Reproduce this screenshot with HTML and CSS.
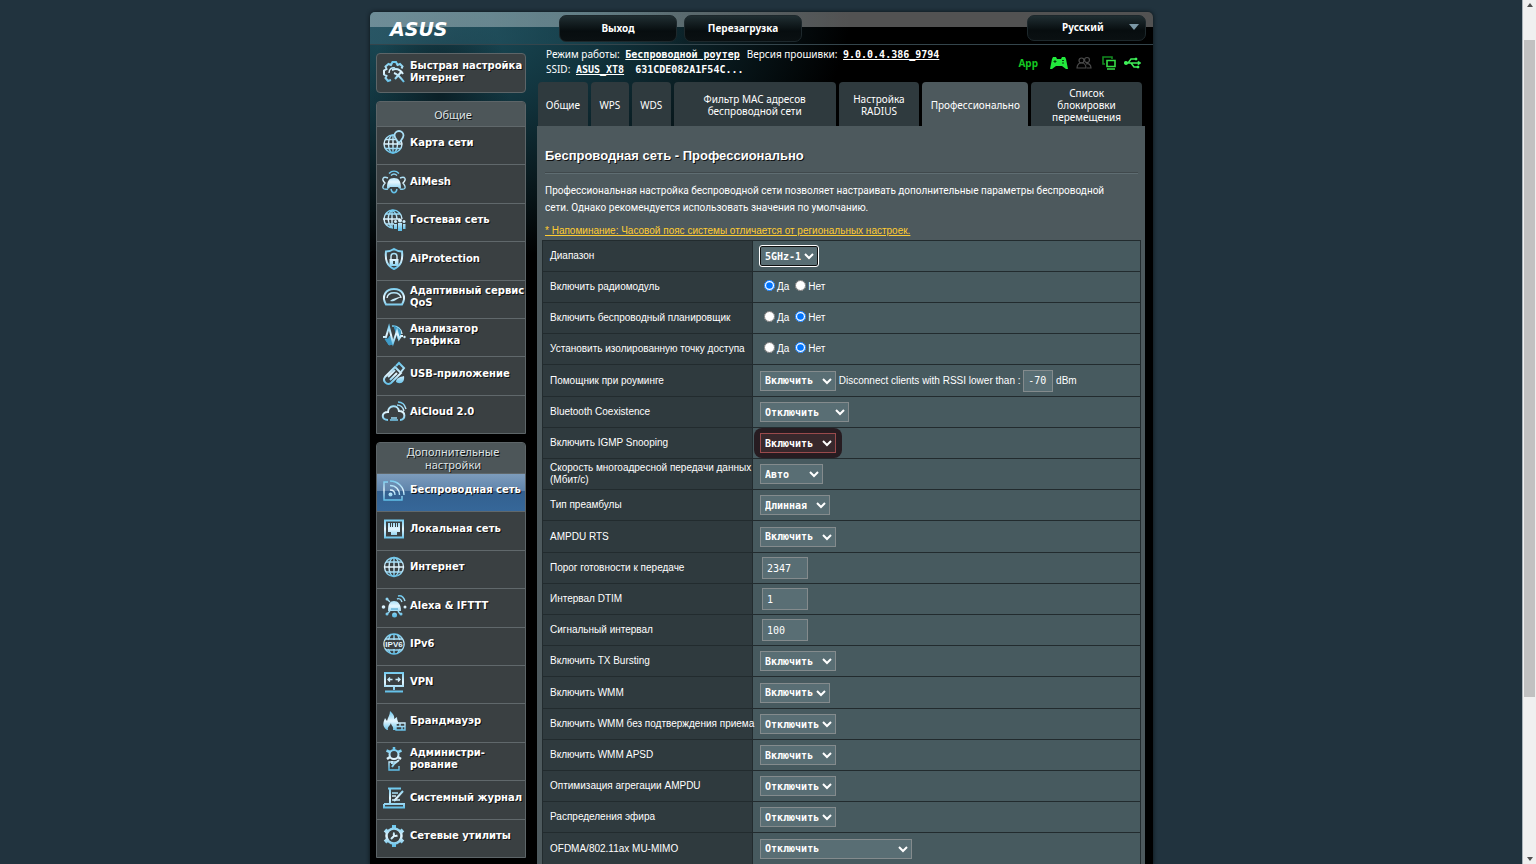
FILE: index.html
```html
<!DOCTYPE html>
<html lang="ru">
<head>
<meta charset="utf-8">
<title>ASUS Wireless Router - Профессионально</title>
<link rel="stylesheet" href="styles.css">
</head>
<body>
<svg class="defs" width="0" height="0" aria-hidden="true">
  <defs>
    <linearGradient id="ice" gradientUnits="userSpaceOnUse" x1="0" y1="2" x2="0" y2="22">
      <stop offset="0" stop-color="#6cc8ee"/><stop offset=".5" stop-color="#e6f7ff"/><stop offset="1" stop-color="#5fbfe8"/>
    </linearGradient>
  </defs>
</svg>
<div class="viewport">
<div class="router">
  <header class="topbar">
    <svg class="logo" viewBox="0 0 60 16" role="img" aria-label="ASUS"><text x="0" y="15">ASUS</text></svg>
    <button class="top-btn logout" type="button">Выход</button>
    <button class="top-btn reboot" type="button">Перезагрузка</button>
    <button class="top-btn lang" type="button">Русский<span class="caret"></span></button>
  </header>
  <div class="columns">
    <nav class="sidebar">
      <a class="quick" href="#">
        <svg class="ico" viewBox="0 0 24 24"><path d="M9 20l-3 1-2.500-3 1-2-2.500-1.500v-4L4.500 9l-1-2.500L6.500 4 9 5l1.500-3h3.500l1.500 3 2.500-1 2.500 2.500-1 2" class="s2"/><path d="M7 13c0-4 3-6 6-5" class="s"/><path d="M10 10c4-2 8-1 11 4M12 13c3 1 7 5 10 9M13 19l7-8" class="s2"/></svg>
        <span>Быстрая настройка<br>Интернет</span>
      </a>
      <section class="menu">
        <h2>Общие</h2>
        <ul>
          <li><a href="#"><svg class="ico" viewBox="0 0 24 24"><circle cx="11" cy="13" r="9" class="s"/><ellipse cx="11" cy="13" rx="4.500" ry="9" class="s"/><path d="M11 4v18M2 13h18M3 8.500h13M3.500 17.500h15" class="s"/><path d="M17 12c-3-4-4.500-5-4.500-7.500a4.500 4.500 0 0 1 9 0C21.500 7 20 8 17 12z" class="pin"/></svg><span>Карта сети</span></a></li>
          <li><a href="#"><svg class="ico" viewBox="0 0 24 24"><path d="M5 18c0-7 2-10 7-10s7 3 7 10c-1 1-2 1-3-1H8c-1 2-2 2-3 1z" class="f"/><path d="M7 3.500c3-3 7-3 10 0M9 5.500c2-2 4-2 6 0" class="s"/><path d="M6 8C1 6-1 9 3 13c-4 5-2 7 3 6M18 8c5-2 7 1 3 5 4 5 2 7-3 6" class="s"/><path d="M9 19c1 5 5 5 6 0" class="s"/></svg><span>AiMesh</span></a></li>
          <li><a href="#"><svg class="ico" viewBox="0 0 24 24"><path d="M11 20a9 9 0 1 1 9-9M10 20C5 14 5 7 10 2c3 2 5 5 5 9M1 11h17M3 6h15M3 16h9M10 2v18" class="s"/><circle cx="18" cy="12.500" r="2" class="f"/><circle cx="13.500" cy="13.500" r="1.500" class="f"/><circle cx="22" cy="13.500" r="1.500" class="f"/><path d="M16 15h4v8h-4zM12 16h3v5h-3zM21 16h2.500v5H21z" class="f"/></svg><span>Гостевая сеть</span></a></li>
          <li><a href="#"><svg class="ico" viewBox="0 0 24 24"><path d="M12 2c3 2 5 2.500 8 2.500 1 9-1 14-8 17.500C5 18.500 3 13.500 4 4.500 7 4.500 9 4 12 2z" class="s2"/><path d="M9 12v-2.500a3 3 0 0 1 6 0V12" class="s"/><path d="M7.500 12h9v7h-9z" class="f"/><path d="M12 14v3" class="dark"/></svg><span>AiProtection</span></a></li>
          <li><a href="#"><svg class="ico" viewBox="0 0 24 24"><path d="M4 19.500C-1 11 4 4 12 4s13 7 8 15.500z" class="s2"/><path d="M5 13c1-7 13-7 14 0" class="s"/><path d="M8 16c4 1 6-1 12-5-5 2-9 2-12 5z" class="f"/></svg><span>Адаптивный сервис<br>QoS</span></a></li>
          <li><a href="#"><svg class="ico" viewBox="0 0 24 24"><path d="M10 3a9 9 0 0 1 10 8" class="s"/><path d="M12 3l6 4 1 7-3 2zM3 16h3l2-3 3 8-4 1z" class="tint"/><path d="M1 14h3l3-10 4 16 4-12 2 8 2-3h2" class="s2"/><circle cx="22.500" cy="14" r="1.200" class="f"/></svg><span>Анализатор<br>трафика</span></a></li>
          <li><a href="#"><svg class="ico" viewBox="0 0 24 24"><path d="M3 15L13 5l6 6L9 21c-4 3-9-2-6-6z" class="s2"/><path d="M14 4l3-3 5 5-3 4M6 15l7-7M8 18l7-7" class="s2"/><path d="M14 20c0-4 4-5 8-6 1 6-3 9-8 6z" class="f"/></svg><span>USB-приложение</span></a></li>
          <li><a href="#"><svg class="ico" viewBox="0 0 24 24"><path d="M6 20c-7 0-7-8 0-8 0-7 10-8 11-1 7 0 7 9 1 9" class="s2"/><path d="M15 5c4 0 6 2 7 6M16 2c5 0 7 3 8 7" class="s"/><path d="M8 20h8M9 18h6" class="s"/></svg><span>AiCloud 2.0</span></a></li>
        </ul>
      </section>
      <section class="menu">
        <h2>Дополнительные настройки</h2>
        <ul>
          <li class="current"><a href="#"><svg class="ico" viewBox="0 0 24 24"><path d="M6 4H2v18h18v-4M8 3c8 0 14 6 14 14M8 7.500c6 0 9.500 4 9.500 9.500M8 12c3 0 5 2 5 5" class="s"/><circle cx="8.500" cy="16.500" r="2" class="f"/></svg><span>Беспроводная сеть</span></a></li>
          <li><a href="#"><svg class="ico" viewBox="0 0 24 24"><path d="M3 3.500h18v17H3z" class="s2"/><path d="M6 6h2v4h1V6h1v4h1V6h2v4h1V6h1v4h1V6h2v9h-3v3H9v-3H6z" class="f"/></svg><span>Локальная сеть</span></a></li>
          <li><a href="#"><svg class="ico" viewBox="0 0 24 24"><circle cx="12" cy="12" r="9.500" class="s"/><ellipse cx="12" cy="12" rx="5" ry="9.500" class="s"/><path d="M12 2v20M2 12h20M4 7h16M4 17h16" class="s"/></svg><span>Интернет</span></a></li>
          <li><a href="#"><svg class="ico" viewBox="0 0 24 24"><path d="M6 17c0-7 2-10 6-10s7 3 7 10z" class="f"/><path d="M9 15h7" class="tint"/><path d="M5 5l3 3M5 20l3-3M18 20l-2-3M15 5c2-1 4 0 5 3M16 2c4-1 6 2 7 5" class="s"/><circle cx="1.500" cy="13" r="1.800" class="f"/><circle cx="23" cy="13" r="1.500" class="f"/><circle cx="5" cy="5" r="1.500" class="f"/><circle cx="5" cy="20" r="1.500" class="f"/><circle cx="12.500" cy="21" r="2.500" class="f"/><circle cx="19" cy="20" r="1.500" class="f"/></svg><span>Alexa &amp; IFTTT</span></a></li>
          <li><a href="#"><svg class="ico" viewBox="0 0 24 24"><circle cx="12" cy="12" r="10" class="s"/><path d="M12 2v6M12 17v5M4 7h16M4 18h16M9 2L6 8M15 2l3 6M6 17l3 5M18 17l-3 5" class="s"/><text x="12" y="15" class="ipv">IPV6</text></svg><span>IPv6</span></a></li>
          <li><a href="#"><svg class="ico" viewBox="0 0 24 24"><path d="M3 3h18v13H3zM12 16v4M3 21.500h18" class="s2"/><path d="M10.500 9.500H6M8 7.500l-2 2 2 2M13.500 9.500H18M16 7.500l2 2-2 2" class="s"/></svg><span>VPN</span></a></li>
          <li><a href="#"><svg class="ico" viewBox="0 0 24 24"><path d="M5 21C-1 17 2 12 3 9l2 3c1-4 3-6 3-10 3 3 5 5 4 8l3-2c0 4 2 5 1 7h-2v6h-3c1-4-2-4-2-7-1 3-4 4-3 7z" class="f"/><path d="M14 14h9v7h-9zM14 17.500h9M18 14v3.500M20 17.500V21" class="s"/></svg><span>Брандмауэр</span></a></li>
          <li><a href="#"><svg class="ico" viewBox="0 0 24 24"><circle cx="12" cy="7.500" r="4.500" class="s2"/><path d="M12 0v3M4.500 3.500L8 5M16 5l3.500-1.500M5 12l3-2M16 10l3 2" class="s3"/><path d="M15 15H7v8h10v-4" class="s"/><path d="M10 20l2-3 5-4M10 14v3" class="s2"/></svg><span>Администри-<br>рование</span></a></li>
          <li><a href="#"><svg class="ico" viewBox="0 0 24 24"><path d="M6 2.500h13M8 3v15M2 18v3.500h20V18H2" class="s2"/><path d="M10 7h6M10 10h4M10 14h8" class="s"/><path d="M12 15l9-10" class="s2"/></svg><span>Системный журнал</span></a></li>
          <li><a href="#"><svg class="ico" viewBox="0 0 24 24"><circle cx="12" cy="12" r="7.500" class="s3"/><path d="M12 1v4M12 19v4M3 6l3 2.500M18 15.500l3 2.500M3 18l3-2.500M18 8.500L21 6" class="s4"/><path d="M9 15l4-4M12 8.500c-1 3 1 4 3.500 3" class="s2"/></svg><span>Сетевые утилиты</span></a></li>
        </ul>
      </section>
    </nav>
    <main class="main">
      <div class="status">
        <div class="info">
          <p>Режим работы: <a class="mono" href="#">Беспроводной роутер</a><span class="fw">Версия прошивки:</span> <a class="mono" href="#">9.0.0.4.386_9794</a></p>
          <p>SSID: <a class="mono" href="#">ASUS_XT8</a><span class="mono second">631CDE082A1F54C...</span></p>
        </div>
        <div class="tray">
          <a href="#">App</a>
          <svg class="pad" viewBox="0 0 18 14"><path d="M3 1h3l1 2h4l1-2h3l1 2 2 10h-2l-4-3H6l-4 3H0L2 3z" fill="#22e83c"/><path d="M3.500 5.500h3M5 4v3M12 4.500h2M12 7h2" stroke="#043c0a"/></svg>
          <svg class="people" viewBox="0 0 16 14" fill="none" stroke="#4b4b4b" stroke-width="1.200"><circle cx="5.500" cy="4.500" r="2.500"/><circle cx="11" cy="4" r="2.500"/><path d="M1 12c0-7 9-7 9 0zM10 8c3-1 5 1 5 4h-4"/></svg>
          <svg class="screens" viewBox="0 0 14 14" fill="none"><path d="M3 8H1V1h9v2" stroke="#138a20" stroke-width="1.600"/><path d="M5 4.500h8v6H5zM5 13h8" stroke="#35dd45" stroke-width="1.600"/></svg>
          <svg class="usb" viewBox="0 0 18 12" fill="none" stroke="#3ff058" stroke-width="1.500"><path d="M1 6h14M4 6l3-4h4M7 6l3 4h3"/><circle cx="2" cy="6" r="1.300" fill="#3ff058"/><path d="M14 4l3 2-3 2zM11 1h2v2h-2zM13 9h2v2h-2z" fill="#3ff058" stroke-width=".5"/></svg>
        </div>
      </div>
      <nav class="tabs">
        <a href="#">Общие</a>
        <a href="#">WPS</a>
        <a href="#">WDS</a>
        <a class="wide" href="#">Фильтр MAC адресов беспроводной сети</a>
        <a href="#">Настройка RADIUS</a>
        <a class="active" href="#">Профессионально</a>
        <a class="wide" href="#">Список блокировки перемещения</a>
      </nav>
      <div class="panel">
        <h1>Беспроводная сеть - Профессионально</h1>
        <p class="desc">Профессиональная настройка беспроводной сети позволяет настраивать дополнительные параметры беспроводной сети. Однако рекомендуется использовать значения по умолчанию.</p>
        <a class="warn" href="#">* Напоминание: Часовой пояс системы отличается от региональных настроек.</a>
        <table class="form">
          <tr><th><label for="band">Диапазон</label></th><td><select id="band" class="w58 focus"><option>5GHz-1</option></select></td></tr>
          <tr><th>Включить радиомодуль</th><td><label><input type="radio" name="radio" checked>Да</label><label><input type="radio" name="radio">Нет</label></td></tr>
          <tr><th>Включить беспроводный планировщик</th><td><label><input type="radio" name="sched">Да</label><label><input type="radio" name="sched" checked>Нет</label></td></tr>
          <tr><th>Установить изолированную точку доступа</th><td><label><input type="radio" name="iso">Да</label><label><input type="radio" name="iso" checked>Нет</label></td></tr>
          <tr><th><label for="roam">Помощник при роуминге</label></th><td><select id="roam" class="w76"><option>Включить</option></select> <label for="rssi">Disconnect clients with RSSI lower than :</label> <input id="rssi" class="short" type="text" value="-70"> dBm</td></tr>
          <tr><th><label for="bt">Bluetooth Coexistence</label></th><td><select id="bt" class="w89"><option>Отключить</option></select></td></tr>
          <tr><th><label for="igmp">Включить IGMP Snooping</label></th><td><div class="mark"><select id="igmp" class="w76"><option>Включить</option></select></div></td></tr>
          <tr><th><label for="mrate">Скорость многоадресной передачи данных<br>(Мбит/с)</label></th><td><select id="mrate" class="w63"><option>Авто</option></select></td></tr>
          <tr><th><label for="pre">Тип преамбулы</label></th><td><select id="pre" class="w70"><option>Длинная</option></select></td></tr>
          <tr><th><label for="ampdu">AMPDU RTS</label></th><td><select id="ampdu" class="w76"><option>Включить</option></select></td></tr>
          <tr><th><label for="rts">Порог готовности к передаче</label></th><td><input id="rts" class="num" type="text" value="2347"></td></tr>
          <tr><th><label for="dtim">Интервал DTIM</label></th><td><input id="dtim" class="num" type="text" value="1"></td></tr>
          <tr><th><label for="bcn">Сигнальный интервал</label></th><td><input id="bcn" class="num" type="text" value="100"></td></tr>
          <tr><th><label for="tx">Включить TX Bursting</label></th><td><select id="tx" class="w76"><option>Включить</option></select></td></tr>
          <tr><th><label for="wmm">Включить WMM</label></th><td><select id="wmm" class="w70"><option>Включить</option></select></td></tr>
          <tr><th><label for="noack">Включить WMM без подтверждения приема</label></th><td><select id="noack" class="w76"><option>Отключить</option></select></td></tr>
          <tr><th><label for="apsd">Включить WMM APSD</label></th><td><select id="apsd" class="w76"><option>Включить</option></select></td></tr>
          <tr><th><label for="agg">Оптимизация агрегации AMPDU</label></th><td><select id="agg" class="w76"><option>Отключить</option></select></td></tr>
          <tr><th><label for="air">Распределения эфира</label></th><td><select id="air" class="w76"><option>Отключить</option></select></td></tr>
          <tr><th><label for="ofdma">OFDMA/802.11ax MU-MIMO</label></th><td><select id="ofdma" class="w152"><option>Отключить</option></select></td></tr>
        </table>
      </div>
    </main>
  </div>
</div>
</div>
<div class="scrollbar" aria-hidden="true"><span class="up"></span><span class="thumb"></span><span class="down"></span></div>
</body>
</html>
```

FILE: styles.css
```css
* { box-sizing: border-box; }
body { margin: 0; display: flex; height: 100vh; overflow: hidden; background: #21333e; color: #fff; font: 10px/12px "Liberation Sans", Arial, sans-serif; }
a { color: inherit; text-decoration: none; }
p, h1, h2, ul { margin: 0; padding: 0; }
.defs { position: absolute; }
.viewport { flex: 1; height: 100vh; overflow: hidden; padding: 12px 0 0 1px; }
.router { max-width: 783px; min-height: 100%; margin: 0 auto; border-radius: 5px 5px 0 0; box-shadow: 0 0 4px #0a1216;
  background: radial-gradient(ellipse 70px 100px at 70px 80px, rgba(8, 24, 30, .8) 0, transparent 100%), radial-gradient(ellipse 420px 250px at 60px 0, #1d5260 0, #12353f 40%, transparent 100%), #000; }

.topbar { display: flex; height: 33px; padding: 3px 7px 0 20px; border-bottom: 1px solid #34454c; border-radius: 5px 5px 0 0;
  background: linear-gradient(rgba(255,255,255,.32) 15px, transparent 15px), linear-gradient(90deg, rgba(45,90,105,.8), rgba(30,75,88,.6) 22%, transparent 40%); }
.logo { width: 60px; height: 16px; margin-top: 6px; overflow: visible; }
.logo text { font: italic bold 19px "DejaVu Sans", sans-serif; fill: #fff; }
.top-btn { height: 27px; border: 1px solid #1d282c; border-radius: 7px; background: linear-gradient(#202e32, #070d0f 60%, #0a1012); color: #fff; font: bold 10px "Noto Sans", sans-serif; padding: 0 0 2px; }
.logout { width: 118px; margin-left: 109px; }
.reboot { width: 118px; margin-left: 7px; }
.lang { display: flex; align-items: center; width: 119px; height: 26px; margin-left: auto; padding-left: 34px; }
.caret { margin: 0 6px 0 auto; border: 5px solid transparent; border-top: 6px solid #7c98a6; border-bottom: 0; }

.columns { display: flex; gap: 11px; padding: 0 8px 0 6px; }
.sidebar { flex: 0 0 150px; padding-top: 8px; display: flex; flex-direction: column; gap: 8px; font: bold 10px/12px "DejaVu Sans", Verdana, sans-serif; text-shadow: 1px 1px 0 #111; white-space: nowrap; }
.ico { flex: 0 0 24px; width: 24px; height: 24px; overflow: visible; }
.s, .s2, .s3, .s4 { fill: none; stroke: url(#ice); stroke-width: 1.400; }
.s2 { stroke-width: 2; }
.s3 { stroke-width: 2.500; }
.s4 { stroke-width: 4; }
.f { fill: url(#ice); }
.tint { fill: #3f9cc8; stroke: #3f9cc8; }
.pin { fill: #3a4042; stroke: #a9def5; stroke-width: 1.800; }
.dark { stroke: #344; stroke-width: 2; }
.ipv { font: bold 8px "Liberation Sans", sans-serif; fill: #e6f7ff; stroke: #3a4042; stroke-width: 2; paint-order: stroke; text-anchor: middle; text-shadow: none; }
.quick { display: flex; gap: 4px; height: 40px; padding: 6px 0 0 5px; border: 1px solid #5d6568; border-radius: 4px; background: #3a4042; }
.menu { border: 1px solid #5d6568; border-radius: 4px 4px 0 0; background: #3a4042; }
.menu h2 { min-height: 24px; padding: 6px 18px 4px 22px; border-radius: 3px 3px 0 0; background: #4d5659; color: #dde3e5; font: 11px/13px "Noto Sans", sans-serif; text-align: center; white-space: normal; }
.menu + .menu h2 { padding: 2px 18px 2px 22px; }
.menu ul { list-style: none; }
.menu li { height: 38px; border-top: 1px solid #60686b; }
.menu li:nth-child(5n+2), .menu li:nth-child(5n+4) { height: 39px; }
.menu li a { display: flex; align-items: center; gap: 4px; height: 100%; padding: 0 0 5px 5px; }
.menu li.current { background: linear-gradient(#7d9cbc, #5f84ab 45%, #33608f 46%, #366799); }

.main { flex: 1; min-width: 0; }
.status { display: flex; justify-content: space-between; height: 37px; padding: 2px 3px 0 9px; font: 10px/15px "Noto Sans", sans-serif; }
.mono { font: bold 10px/15px "DejaVu Sans Mono", monospace; }
a.mono { text-decoration: underline; }
.info .mono { margin-left: 3px; }
.fw { margin-left: 7px; }
.info .second { margin-left: 11px; }
.tray { display: flex; align-items: center; gap: 8px; padding-bottom: 4px; color: #14c822; font: bold 10px "Noto Sans", sans-serif; }
.tray a { margin-right: 4px; }
.pad { width: 18px; height: 14px; }
.people { width: 16px; height: 14px; }
.screens { width: 14px; height: 14px; margin-left: 2px; }
.usb { width: 18px; height: 12px; }

.tabs { display: grid; grid-template-columns: 50fr 38fr 39fr 162fr 81fr 106fr 111fr; gap: 3px; height: 44px; padding: 0 3px 0 1px; font: 10px/12px "Noto Sans", sans-serif; }
.tabs a { display: flex; align-items: center; justify-content: center; min-width: 0; text-align: center; border-radius: 4px 4px 0 0; background: #2f3a3e; padding-top: 2px; }
.tabs .active { background: #4d595d; }
.tabs .wide { padding: 2px 16px 0; }

.panel { padding: 22px 4px 0 5px; background: #4d595d; }
.panel h1 { margin: 0 3px; padding-bottom: 10px; border-bottom: 1px solid #5f6d72; box-shadow: 0 -1px 0 #40494c inset; font: bold 13px/15px "Liberation Sans", Arial, sans-serif; text-shadow: 1px 1px 0 #111; }
.desc { margin: 8px 3px 0; padding-right: 24px; font-family: Roboto, "Liberation Sans", sans-serif; line-height: 17px; }
.warn { display: block; margin: 9px 3px 3px; color: #fc3; text-decoration: underline; }
.form { width: 100%; border-collapse: collapse; table-layout: fixed; white-space: nowrap; }
.form tr { height: 31px; }
.form tr:nth-child(5n) { height: 32px; }
.form th, .form td { border: 1px solid #222b2e; padding: 0 0 0 7px; text-align: left; font-weight: normal; vertical-align: middle; }
.form th { width: 210px; background: #2f3a3e; line-height: 12px; }
.form td { background: #475a5f; }
select, input[type=text] { height: 20px; margin: 0; border: 1px solid #848b8d; border-radius: 0; background: #596e74; color: #fff; font: bold 10px "DejaVu Sans Mono", monospace; vertical-align: middle; padding: 0; }
input[type=text] { height: 22px; padding: 0 4px; font-weight: normal; }
input[type=radio] { width: 11px; height: 11px; margin: 0 2px 3px 4px; vertical-align: middle; }
.form td label + label input { margin-left: 6px; }
.form .num { width: 46px; margin-left: 2px; }
.short { width: 30px; }
.w58 { width: 58px; } .w63 { width: 63px; } .w70 { width: 70px; } .w76 { width: 76px; } .w89 { width: 89px; } .w152 { width: 152px; }
.focus { outline: 1px solid #fff; border: 1px solid #101010; border-radius: 2px; }
.mark { display: inline-block; margin-left: -6px; padding: 5px 6px; border-radius: 8px; background: #271c21; vertical-align: middle; }
.mark select { display: block; background: #38282c; border-color: #9a4a4c; }

.scrollbar { flex: 0 0 14px; display: flex; flex-direction: column; align-items: center; padding: 3px 0; border-left: 1px solid #aab4ba; background: #f0f0f0; }
.up, .down { border: 3px solid transparent; }
.up { border-bottom: 4px solid #505050; border-top: 0; }
.down { margin-top: auto; border-top: 4px solid #505050; border-bottom: 0; }
.thumb { width: 11px; height: 76vh; margin-top: 33px; background: #c1c1c1; }
```
